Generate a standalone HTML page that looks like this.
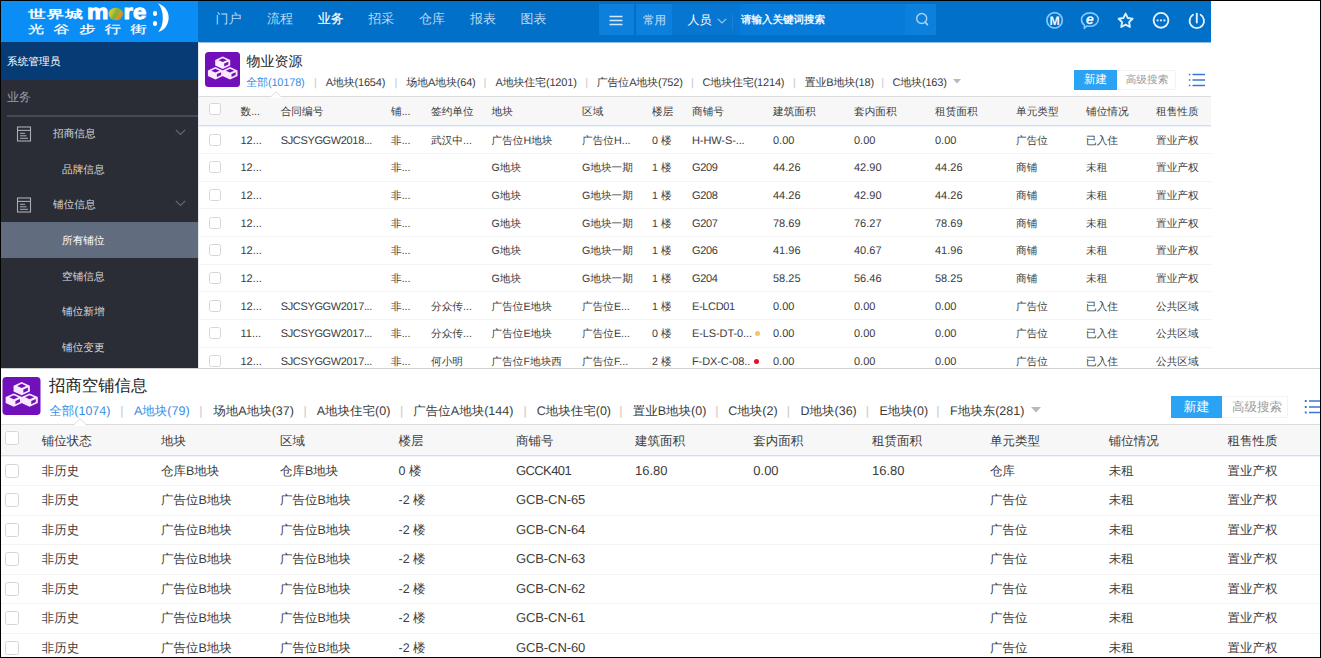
<!DOCTYPE html>
<html lang="zh"><head><meta charset="utf-8"><title>物业资源</title>
<style>
*{box-sizing:border-box;margin:0;padding:0}
html,body{width:1321px;height:658px;overflow:hidden;background:#fff}
body{font-family:"Liberation Sans",sans-serif;color:#333;position:relative;font-size:11px;text-rendering:geometricPrecision}
.a{position:absolute;white-space:nowrap}
.t{position:absolute;white-space:nowrap;line-height:16px;height:16px}
/* top panel */
#logo{left:0;top:0;width:198px;height:42px;background:#0a8ef5;overflow:hidden}
#hdr{left:198px;top:0;width:1013px;height:42px;background:#0170c9}
.nav{font-size:13px;color:#b9d9f4;top:11px}
.nav.on{color:#fff;-webkit-text-stroke:0.15px #fff}
.hb{top:4px;height:31px;background:#0d80dd}
#user{left:0;top:42px;width:198px;height:38px;background:#063b75}
#side{left:0;top:80px;width:198px;height:288px;background:#2a2d36}
.si{font-size:10.67px;color:#d6d8dd;left:62px}
.sp{font-size:10.67px;color:#d6d8dd;left:53px}
/* table top */
.c1{font-size:10.67px;color:#3c3c3c}
.l1{font-size:11px;letter-spacing:-0.35px}
.n1{font-size:11px}
.h1{font-size:10.67px;color:#3c3c3c}
.cb{position:absolute;border:1px solid #d6d6d6;border-radius:2.5px;background:#fff}
.sep{position:absolute;height:1px;background:#f3f3f3}
.f1{font-size:11px;color:#3c3c3c;top:74.7px;letter-spacing:-0.18px}
/* bottom */
.f2{font-size:12.5px;color:#3c3c3c;top:402.7px}
.h2{font-size:12.5px;color:#3c3c3c}
.c2{font-size:12.5px;color:#3c3c3c}
.n2{font-size:13px}
.l2{font-size:13px;letter-spacing:-0.6px}
.t.hy{letter-spacing:-0.1px}
.t.blue{color:#3a8ee6}
.t.bar{color:#c8c8c8}
</style></head><body>

<svg width="0" height="0" style="position:absolute"><defs>
<symbol id="cubes" viewBox="0 0 35 35">
<rect x="0" y="0" width="35" height="35" rx="3.5" fill="#7110ba"/>
<g id="cube1">
<path d="M17.7 4.6 L25.2 8 L25.2 13.4 L17.7 16.9 L10.2 13.4 L10.2 8 Z" fill="#fbe9ff"/>
<path d="M17.7 6.3 L21.9 8.2 L17.7 10.1 L13.5 8.2 Z" fill="#7110ba"/>
<path d="M19.2 11.6 L23.4 9.7 L23.4 12.6 L19.2 14.5 Z" fill="#7110ba"/>
</g>
<use href="#cube1" x="-7.3" y="10.5"/>
<use href="#cube1" x="7.3" y="10.5"/>
</symbol>
</defs></svg>

<div class="a" id="logo">
<div class="a" style="left:27.5px;top:4.5px;font-size:16px;line-height:20px;font-weight:bold;color:#fff;transform-origin:0 50%;transform:scale(1.12,0.7);letter-spacing:0.5px">世界城</div>
<div class="a" style="left:86.5px;top:0.5px;font-size:20px;line-height:24px;font-weight:bold;color:#fff;letter-spacing:0px;-webkit-text-stroke:0.9px #fff;transform-origin:0 50%;transform:scale(1.2,1.05)">m<span style="display:inline-block;width:11.5px;height:11.5px;border-radius:6px;margin:0 0.6px 0 0.6px;vertical-align:-0.5px;background:linear-gradient(115deg,#e9c92c 0%,#cfc22c 28%,#6fb63c 48%,#e98d2c 72%,#63b040 100%)"></span>re</div>
<div class="a" style="left:152.5px;top:11.2px;width:4.4px;height:4.4px;border-radius:3px;background:#fff"></div>
<div class="a" style="left:152.5px;top:21.2px;width:4.4px;height:4.4px;border-radius:3px;background:#fff"></div>
<svg class="a" style="left:156px;top:2px" width="14" height="32" viewBox="0 0 14 32"><path d="M2 1.2 C10.5 4.5 13.2 11 12.6 17 C12 23.5 8 28.5 2.2 30 C5.8 25.5 6.8 21 6.8 15.5 C6.8 10 5.4 5.5 2 1.2Z" fill="#fff"/></svg>
<div class="a" style="left:27.5px;top:20px;font-size:15px;line-height:20px;color:#fff;letter-spacing:8.7px;-webkit-text-stroke:0.3px #fff;transform-origin:0 50%;transform:scale(1.08,0.74)">光谷步行街</div>
</div>
<div class="a" style="left:198px;top:42px;width:1013px;height:1px;background:#8fc1e8"></div>
<div class="a" id="hdr">
<div class="t nav" style="left:17.6px">门户</div>
<div class="t nav" style="left:69.0px">流程</div>
<div class="t nav on" style="left:119.7px">业务</div>
<div class="t nav" style="left:170.3px">招采</div>
<div class="t nav" style="left:221.0px">仓库</div>
<div class="t nav" style="left:272.0px">报表</div>
<div class="t nav" style="left:322.5px">图表</div>
<div class="a hb" style="left:401px;width:35px"></div>
<svg class="a" style="left:411px;top:15px" width="14" height="11" viewBox="0 0 14 11"><path d="M0.5 1.5h13M0.5 5.5h13M0.5 9.5h13" stroke="#d4e9fb" stroke-width="1.5"/></svg>
<div class="a hb" style="left:438px;width:36px"></div>
<div class="t" style="left:445px;top:12.8px;font-size:11.5px;color:#b2d7f6;-webkit-text-stroke:0.2px #b2d7f6">常用</div>
<div class="a hb" style="left:474px;width:68px;background:#0776d0"></div>
<div class="a hb" style="left:542px;width:165px;background:#067bd9"></div>
<div class="t" style="left:489.5px;top:12px;font-size:12px;color:#fff">人员</div>
<svg class="a" style="left:519px;top:17.5px" width="10" height="6" viewBox="0 0 10 6"><path d="M0.8 0.8 L5 5 L9.2 0.8" stroke="#9ccaf0" stroke-width="1.1" fill="none"/></svg>
<div class="a" style="left:534px;top:14px;width:1px;height:16px;background:#1c80d8"></div>
<div class="t" style="left:543px;top:12px;font-size:10.5px;color:#eef6fd;font-weight:bold">请输入关键词搜索</div>
<div class="a hb" style="left:707px;width:31px;background:#0c80dd"></div>
<svg class="a" style="left:716px;top:11px" width="16" height="16" viewBox="0 0 16 16"><circle cx="7.7" cy="7.5" r="5" stroke="#a8d5fa" stroke-width="1.4" fill="none"/><path d="M11.3 11.2 L13.4 13.6" stroke="#a8d5fa" stroke-width="1.7" stroke-linecap="round"/></svg>
<svg class="a" style="left:846px;top:10px" width="21" height="21" viewBox="0 0 21 21"><circle cx="10.6" cy="10.3" r="7.7" stroke="#86c8ff" stroke-width="1.7" fill="none"/><text x="10.6" y="14.7" font-family="Liberation Sans, sans-serif" font-weight="bold" font-size="12.3" fill="#f4faff" text-anchor="middle">M</text></svg>
<svg class="a" style="left:881px;top:10px" width="22" height="21" viewBox="0 0 22 21"><path d="M11 2.9 C16 2.9 19.3 5.8 19.3 9.5 C19.3 13.2 15.6 16.3 10.4 16.3 C9.6 16.3 8.6 16.2 7.8 16 L5.3 18.3 L5.5 15.2 C3.5 13.9 2.5 11.9 2.5 9.5 C2.5 5.8 6 2.9 11 2.9Z" stroke="#86c8ff" stroke-width="1.6" fill="none" stroke-linejoin="round"/><text x="10.8" y="14" font-family="Liberation Sans, sans-serif" font-weight="bold" font-style="italic" font-size="14.5" fill="#f4faff" text-anchor="middle">e</text></svg>
<svg class="a" style="left:916.8px;top:10px" width="21" height="21" viewBox="0 0 21 21"><path d="M10.6 3.6 L12.8 8.0 L17.6 8.7 L14.1 12.1 L14.9 17.0 L10.6 14.7 L6.3 17.0 L7.1 12.1 L3.6 8.7 L8.4 8.0 Z" stroke="#dbeeff" stroke-width="1.9" fill="none" stroke-linejoin="round"/></svg>
<svg class="a" style="left:952px;top:10px" width="21" height="21" viewBox="0 0 21 21"><circle cx="11" cy="10.3" r="7.4" stroke="#e4f2ff" stroke-width="1.9" fill="none"/><circle cx="7.6" cy="10.4" r="1.15" fill="#cfe8ff"/><circle cx="11" cy="10.4" r="1.15" fill="#cfe8ff"/><circle cx="14.4" cy="10.4" r="1.15" fill="#cfe8ff"/></svg>
<svg class="a" style="left:988px;top:10px" width="21" height="21" viewBox="0 0 21 21"><path d="M7 4.8 A7.2 7.2 0 1 0 14.6 4.8" stroke="#e4f2ff" stroke-width="1.9" fill="none" stroke-linecap="round"/><path d="M10.8 3.6 V12.6" stroke="#e4f2ff" stroke-width="1.9" stroke-linecap="round"/></svg>
</div>
<div class="a" id="user"><div class="t" style="left:7px;top:11.5px;font-size:10.67px;color:#fff">系统管理员</div></div>
<div class="a" id="side">
<div class="t" style="left:7px;top:9px;font-size:12px;color:#9b9fa9">业务</div>
<div class="a" style="left:7px;top:35px;width:191px;height:1.5px;background:#474a53"></div>
<div class="a" style="left:0;top:142px;width:198px;height:36px;background:#626c7f"></div>
<svg class="a" style="left:16px;top:46px" width="16" height="16" viewBox="0 0 16 16"><rect x="1.5" y="1" width="13" height="14" stroke="#a9adb6" stroke-width="1.1" fill="none"/><path d="M1.5 4.4h13" stroke="#a9adb6" stroke-width="1.1"/><path d="M4 7.3h5M4 9.8h6.5M4 12.3h8" stroke="#a9adb6" stroke-width="1"/></svg>
<svg class="a" style="left:175px;top:49px" width="11" height="7" viewBox="0 0 11 7"><path d="M0.8 0.8 L5.5 5.5 L10.2 0.8" stroke="#656973" stroke-width="1.2" fill="none"/></svg>
<svg class="a" style="left:16px;top:117px" width="16" height="16" viewBox="0 0 16 16"><rect x="1.5" y="1" width="13" height="14" stroke="#a9adb6" stroke-width="1.1" fill="none"/><path d="M1.5 4.4h13" stroke="#a9adb6" stroke-width="1.1"/><path d="M4 7.3h5M4 9.8h6.5M4 12.3h8" stroke="#a9adb6" stroke-width="1"/></svg>
<svg class="a" style="left:175px;top:120px" width="11" height="7" viewBox="0 0 11 7"><path d="M0.8 0.8 L5.5 5.5 L10.2 0.8" stroke="#656973" stroke-width="1.2" fill="none"/></svg>
<div class="t sp" style="top:46.3px">招商信息</div>
<div class="t si" style="top:81.5px">品牌信息</div>
<div class="t sp" style="top:117px">铺位信息</div>
<div class="t si" style="top:153px;color:#fff">所有铺位</div>
<div class="t si" style="top:188.5px">空铺信息</div>
<div class="t si" style="top:224px">铺位新增</div>
<div class="t si" style="top:259.5px">铺位变更</div>
</div>
<div class="a" style="left:198px;top:42px;width:1px;height:326px;background:#dfe6ee"></div>
<svg class="a" style="left:205px;top:52px" width="35" height="35"><use href="#cubes"/></svg>
<div class="t" style="left:246.5px;top:51px;font-size:14px;line-height:20px;height:20px;color:#222">物业资源</div>
<div class="t f1 blue" style="left:246.3px">全部(10178)</div>
<div class="t f1" style="left:325.7px">A地块(1654)</div>
<div class="t f1" style="left:406.3px">场地A地块(64)</div>
<div class="t f1" style="left:495.5px">A地块住宅(1201)</div>
<div class="t f1" style="left:596.7px">广告位A地块(752)</div>
<div class="t f1" style="left:702.6px">C地块住宅(1214)</div>
<div class="t f1" style="left:804.7px">置业B地块(18)</div>
<div class="t f1" style="left:892.5px">C地块(163)</div>
<div class="t f1 bar" style="left:313.9px">|</div>
<div class="t f1 bar" style="left:394.5px">|</div>
<div class="t f1 bar" style="left:483.5px">|</div>
<div class="t f1 bar" style="left:585.2px">|</div>
<div class="t f1 bar" style="left:691.1px">|</div>
<div class="t f1 bar" style="left:792.9px">|</div>
<div class="t f1 bar" style="left:881.3px">|</div>
<svg class="a" style="left:953px;top:79px" width="8" height="5" viewBox="0 0 8 5"><path d="M0 0h8L4 4.6Z" fill="#b9b9b9"/></svg>
<div class="a" style="left:1074px;top:70px;width:43px;height:20px;background:#2aa3f5;color:#fff;font-size:11.5px;line-height:20px;text-align:center">新建</div>
<div class="a" style="left:1117px;top:70px;width:59px;height:20px;border:1px solid #f3f3f3;border-left:none;color:#9a9a9a;font-size:10.67px;line-height:18.5px;text-align:center;padding-left:2px">高级搜索</div>
<svg class="a" style="left:1188px;top:73px" width="18" height="14" viewBox="0 0 18 14"><path d="M4.5 1.5h12.5M4.5 7h12.5M4.5 12.5h12.5" stroke="#3f74d2" stroke-width="1.5"/><path d="M0.8 1.5h1.6M0.8 7h1.6M0.8 12.5h1.6" stroke="#3f74d2" stroke-width="1.6"/></svg>
<div class="a" style="left:199px;top:96px;width:1012px;height:30px;background:#f7f7f8;border-top:1px solid #dcdcdc;border-bottom:1px solid #c9dff3"></div>
<div class="a" style="left:199px;top:126px;width:1012px;height:1px;background:#edf4fb"></div>
<svg class="a" style="left:270px;top:91px" width="12" height="7" viewBox="0 0 12 7"><path d="M0 6.5 L6 0.8 L12 6.5" fill="#fff" stroke="#dcdcdc" stroke-width="1"/><path d="M0.8 6.6h10.4" stroke="#fff" stroke-width="1.4"/></svg>
<div class="cb" style="left:209px;top:102.5px;width:12px;height:12px"></div>
<div class="t h1" style="left:240.5px;top:103.8px">数...</div>
<div class="t h1" style="left:280.7px;top:103.8px">合同编号</div>
<div class="t h1" style="left:391.0px;top:103.8px">铺...</div>
<div class="t h1" style="left:431.0px;top:103.8px">签约单位</div>
<div class="t h1" style="left:491.5px;top:103.8px">地块</div>
<div class="t h1" style="left:582.0px;top:103.8px">区域</div>
<div class="t h1" style="left:652.0px;top:103.8px">楼层</div>
<div class="t h1" style="left:692.0px;top:103.8px">商铺号</div>
<div class="t h1" style="left:773.0px;top:103.8px">建筑面积</div>
<div class="t h1" style="left:854.0px;top:103.8px">套内面积</div>
<div class="t h1" style="left:935.0px;top:103.8px">租赁面积</div>
<div class="t h1" style="left:1016.0px;top:103.8px">单元类型</div>
<div class="t h1" style="left:1086.0px;top:103.8px">铺位情况</div>
<div class="t h1" style="left:1156.0px;top:103.8px">租售性质</div>
<div class="cb" style="left:209px;top:133.6px;width:12px;height:12px"></div>
<div class="sep" style="left:199px;top:153px;width:1012px"></div>
<div class="t c1 n1" style="left:240.5px;top:132.7px">12...</div>
<div class="t c1 l1" style="left:280.7px;top:132.7px">SJCSYGGW2018...</div>
<div class="t c1" style="left:391.0px;top:132.7px">非...</div>
<div class="t c1" style="left:431.0px;top:132.7px">武汉中...</div>
<div class="t c1" style="left:491.5px;top:132.7px">广告位H地块</div>
<div class="t c1" style="left:582.0px;top:132.7px">广告位H...</div>
<div class="t c1" style="left:652.0px;top:132.7px">0 楼</div>
<div class="t c1 l1 hy" style="left:692.0px;top:132.7px">H-HW-S-...</div>
<div class="t c1 n1" style="left:773.0px;top:132.7px">0.00</div>
<div class="t c1 n1" style="left:854.0px;top:132.7px">0.00</div>
<div class="t c1 n1" style="left:935.0px;top:132.7px">0.00</div>
<div class="t c1" style="left:1016.0px;top:132.7px">广告位</div>
<div class="t c1" style="left:1086.0px;top:132.7px">已入住</div>
<div class="t c1" style="left:1156.0px;top:132.7px">置业产权</div>
<div class="cb" style="left:209px;top:161.3px;width:12px;height:12px"></div>
<div class="sep" style="left:199px;top:181px;width:1012px"></div>
<div class="t c1 n1" style="left:240.5px;top:160.4px">12...</div>
<div class="t c1" style="left:391.0px;top:160.4px">非...</div>
<div class="t c1" style="left:491.5px;top:160.4px">G地块</div>
<div class="t c1" style="left:582.0px;top:160.4px">G地块一期</div>
<div class="t c1" style="left:652.0px;top:160.4px">1 楼</div>
<div class="t c1 l1" style="left:692.0px;top:160.4px">G209</div>
<div class="t c1 n1" style="left:773.0px;top:160.4px">44.26</div>
<div class="t c1 n1" style="left:854.0px;top:160.4px">42.90</div>
<div class="t c1 n1" style="left:935.0px;top:160.4px">44.26</div>
<div class="t c1" style="left:1016.0px;top:160.4px">商铺</div>
<div class="t c1" style="left:1086.0px;top:160.4px">未租</div>
<div class="t c1" style="left:1156.0px;top:160.4px">置业产权</div>
<div class="cb" style="left:209px;top:188.9px;width:12px;height:12px"></div>
<div class="sep" style="left:199px;top:208px;width:1012px"></div>
<div class="t c1 n1" style="left:240.5px;top:188.0px">12...</div>
<div class="t c1" style="left:391.0px;top:188.0px">非...</div>
<div class="t c1" style="left:491.5px;top:188.0px">G地块</div>
<div class="t c1" style="left:582.0px;top:188.0px">G地块一期</div>
<div class="t c1" style="left:652.0px;top:188.0px">1 楼</div>
<div class="t c1 l1" style="left:692.0px;top:188.0px">G208</div>
<div class="t c1 n1" style="left:773.0px;top:188.0px">44.26</div>
<div class="t c1 n1" style="left:854.0px;top:188.0px">42.90</div>
<div class="t c1 n1" style="left:935.0px;top:188.0px">44.26</div>
<div class="t c1" style="left:1016.0px;top:188.0px">商铺</div>
<div class="t c1" style="left:1086.0px;top:188.0px">未租</div>
<div class="t c1" style="left:1156.0px;top:188.0px">置业产权</div>
<div class="cb" style="left:209px;top:216.6px;width:12px;height:12px"></div>
<div class="sep" style="left:199px;top:236px;width:1012px"></div>
<div class="t c1 n1" style="left:240.5px;top:215.7px">12...</div>
<div class="t c1" style="left:391.0px;top:215.7px">非...</div>
<div class="t c1" style="left:491.5px;top:215.7px">G地块</div>
<div class="t c1" style="left:582.0px;top:215.7px">G地块一期</div>
<div class="t c1" style="left:652.0px;top:215.7px">1 楼</div>
<div class="t c1 l1" style="left:692.0px;top:215.7px">G207</div>
<div class="t c1 n1" style="left:773.0px;top:215.7px">78.69</div>
<div class="t c1 n1" style="left:854.0px;top:215.7px">76.27</div>
<div class="t c1 n1" style="left:935.0px;top:215.7px">78.69</div>
<div class="t c1" style="left:1016.0px;top:215.7px">商铺</div>
<div class="t c1" style="left:1086.0px;top:215.7px">未租</div>
<div class="t c1" style="left:1156.0px;top:215.7px">置业产权</div>
<div class="cb" style="left:209px;top:244.2px;width:12px;height:12px"></div>
<div class="sep" style="left:199px;top:264px;width:1012px"></div>
<div class="t c1 n1" style="left:240.5px;top:243.3px">12...</div>
<div class="t c1" style="left:391.0px;top:243.3px">非...</div>
<div class="t c1" style="left:491.5px;top:243.3px">G地块</div>
<div class="t c1" style="left:582.0px;top:243.3px">G地块一期</div>
<div class="t c1" style="left:652.0px;top:243.3px">1 楼</div>
<div class="t c1 l1" style="left:692.0px;top:243.3px">G206</div>
<div class="t c1 n1" style="left:773.0px;top:243.3px">41.96</div>
<div class="t c1 n1" style="left:854.0px;top:243.3px">40.67</div>
<div class="t c1 n1" style="left:935.0px;top:243.3px">41.96</div>
<div class="t c1" style="left:1016.0px;top:243.3px">商铺</div>
<div class="t c1" style="left:1086.0px;top:243.3px">未租</div>
<div class="t c1" style="left:1156.0px;top:243.3px">置业产权</div>
<div class="cb" style="left:209px;top:271.9px;width:12px;height:12px"></div>
<div class="sep" style="left:199px;top:291px;width:1012px"></div>
<div class="t c1 n1" style="left:240.5px;top:270.9px">12...</div>
<div class="t c1" style="left:391.0px;top:270.9px">非...</div>
<div class="t c1" style="left:491.5px;top:270.9px">G地块</div>
<div class="t c1" style="left:582.0px;top:270.9px">G地块一期</div>
<div class="t c1" style="left:652.0px;top:270.9px">1 楼</div>
<div class="t c1 l1" style="left:692.0px;top:270.9px">G204</div>
<div class="t c1 n1" style="left:773.0px;top:270.9px">58.25</div>
<div class="t c1 n1" style="left:854.0px;top:270.9px">56.46</div>
<div class="t c1 n1" style="left:935.0px;top:270.9px">58.25</div>
<div class="t c1" style="left:1016.0px;top:270.9px">商铺</div>
<div class="t c1" style="left:1086.0px;top:270.9px">未租</div>
<div class="t c1" style="left:1156.0px;top:270.9px">置业产权</div>
<div class="cb" style="left:209px;top:299.5px;width:12px;height:12px"></div>
<div class="sep" style="left:199px;top:319px;width:1012px"></div>
<div class="t c1 n1" style="left:240.5px;top:298.6px">12...</div>
<div class="t c1 l1" style="left:280.7px;top:298.6px">SJCSYGGW2017...</div>
<div class="t c1" style="left:391.0px;top:298.6px">非...</div>
<div class="t c1" style="left:431.0px;top:298.6px">分众传...</div>
<div class="t c1" style="left:491.5px;top:298.6px">广告位E地块</div>
<div class="t c1" style="left:582.0px;top:298.6px">广告位E...</div>
<div class="t c1" style="left:652.0px;top:298.6px">1 楼</div>
<div class="t c1 l1" style="left:692.0px;top:298.6px">E-LCD01</div>
<div class="t c1 n1" style="left:773.0px;top:298.6px">0.00</div>
<div class="t c1 n1" style="left:854.0px;top:298.6px">0.00</div>
<div class="t c1 n1" style="left:935.0px;top:298.6px">0.00</div>
<div class="t c1" style="left:1016.0px;top:298.6px">广告位</div>
<div class="t c1" style="left:1086.0px;top:298.6px">已入住</div>
<div class="t c1" style="left:1156.0px;top:298.6px">公共区域</div>
<div class="cb" style="left:209px;top:327.2px;width:12px;height:12px"></div>
<div class="sep" style="left:199px;top:347px;width:1012px"></div>
<div class="t c1 n1" style="left:240.5px;top:326.2px">11...</div>
<div class="t c1 l1" style="left:280.7px;top:326.2px">SJCSYGGW2017...</div>
<div class="t c1" style="left:391.0px;top:326.2px">非...</div>
<div class="t c1" style="left:431.0px;top:326.2px">分众传...</div>
<div class="t c1" style="left:491.5px;top:326.2px">广告位E地块</div>
<div class="t c1" style="left:582.0px;top:326.2px">广告位E...</div>
<div class="t c1" style="left:652.0px;top:326.2px">0 楼</div>
<div class="t c1 l1 hy" style="left:692.0px;top:326.2px">E-LS-DT-0...</div>
<div class="t c1 n1" style="left:773.0px;top:326.2px">0.00</div>
<div class="t c1 n1" style="left:854.0px;top:326.2px">0.00</div>
<div class="t c1 n1" style="left:935.0px;top:326.2px">0.00</div>
<div class="t c1" style="left:1016.0px;top:326.2px">广告位</div>
<div class="t c1" style="left:1086.0px;top:326.2px">已入住</div>
<div class="t c1" style="left:1156.0px;top:326.2px">公共区域</div>
<div class="cb" style="left:209px;top:354.8px;width:12px;height:12px"></div>
<div class="t c1 n1" style="left:240.5px;top:353.9px">12...</div>
<div class="t c1 l1" style="left:280.7px;top:353.9px">SJCSYGGW2017...</div>
<div class="t c1" style="left:391.0px;top:353.9px">非...</div>
<div class="t c1" style="left:431.0px;top:353.9px">何小明</div>
<div class="t c1" style="left:491.5px;top:353.9px">广告位F地块西</div>
<div class="t c1" style="left:582.0px;top:353.9px">广告位F...</div>
<div class="t c1" style="left:652.0px;top:353.9px">2 楼</div>
<div class="t c1 l1 hy" style="left:692.0px;top:353.9px">F-DX-C-08..</div>
<div class="t c1 n1" style="left:773.0px;top:353.9px">0.00</div>
<div class="t c1 n1" style="left:854.0px;top:353.9px">0.00</div>
<div class="t c1 n1" style="left:935.0px;top:353.9px">0.00</div>
<div class="t c1" style="left:1016.0px;top:353.9px">广告位</div>
<div class="t c1" style="left:1086.0px;top:353.9px">已入住</div>
<div class="t c1" style="left:1156.0px;top:353.9px">公共区域</div>
<div class="a" style="left:755px;top:331.3px;width:5px;height:5px;border-radius:3px;background:#f6c466"></div>
<div class="a" style="left:754.2px;top:358.7px;width:5.2px;height:5.2px;border-radius:3px;background:#e81123"></div>
<div class="a" style="left:0;top:368px;width:1321px;height:290px;background:#fff;border-top:1px solid #d2d2d2;overflow:hidden"></div>
<svg class="a" style="left:2px;top:377px" width="39" height="38"><use href="#cubes"/></svg>
<div class="t" style="left:49px;top:374px;font-size:16.4px;line-height:24px;height:24px;color:#222">招商空铺信息</div>
<div class="t f2 blue" style="left:49.3px">全部(1074)</div>
<div class="t f2 blue" style="left:134.0px">A地块(79)</div>
<div class="t f2" style="left:213.3px">场地A地块(37)</div>
<div class="t f2" style="left:316.7px">A地块住宅(0)</div>
<div class="t f2" style="left:413.3px">广告位A地块(144)</div>
<div class="t f2" style="left:536.7px">C地块住宅(0)</div>
<div class="t f2" style="left:632.7px">置业B地块(0)</div>
<div class="t f2" style="left:728.3px">C地块(2)</div>
<div class="t f2" style="left:800.5px">D地块(36)</div>
<div class="t f2" style="left:879.5px">E地块(0)</div>
<div class="t f2" style="left:950.0px">F地块东(281)</div>
<div class="t f2 bar" style="left:120.2px">|</div>
<div class="t f2 bar" style="left:199.2px">|</div>
<div class="t f2 bar" style="left:303.5px">|</div>
<div class="t f2 bar" style="left:400.0px">|</div>
<div class="t f2 bar" style="left:523.5px">|</div>
<div class="t f2 bar" style="left:619.2px">|</div>
<div class="t f2 bar" style="left:715.2px">|</div>
<div class="t f2 bar" style="left:786.8px">|</div>
<div class="t f2 bar" style="left:865.7px">|</div>
<div class="t f2 bar" style="left:936.2px">|</div>
<svg class="a" style="left:1030.5px;top:407px" width="10" height="6" viewBox="0 0 10 6"><path d="M0 0h10L5 5.6Z" fill="#b9b9b9"/></svg>
<div class="a" style="left:1171px;top:396px;width:51px;height:22px;background:#2aa3f5;color:#fff;font-size:13px;line-height:22px;text-align:center">新建</div>
<div class="a" style="left:1222px;top:396px;width:66px;height:22px;border:1px solid #f3f3f3;border-left:none;color:#9a9a9a;font-size:12.5px;line-height:20.5px;text-align:center;padding-left:5px">高级搜索</div>
<svg class="a" style="left:1304px;top:399px" width="20" height="16" viewBox="0 0 20 16"><path d="M5 2h15M5 8h15M5 13.5h15" stroke="#3f74d2" stroke-width="1.7"/><path d="M0.8 2h1.9M0.8 8h1.9M0.8 13.5h1.9" stroke="#3f74d2" stroke-width="1.8"/></svg>
<div class="a" style="left:1px;top:424px;width:1319px;height:32px;background:#f7f7f8;border-top:1px solid #dcdcdc;border-bottom:1px solid #c9dff3"></div>
<div class="a" style="left:1px;top:456px;width:1319px;height:1px;background:#edf4fb"></div>
<svg class="a" style="left:73px;top:418px" width="14" height="8" viewBox="0 0 14 8"><path d="M0 7.5 L7 0.8 L14 7.5" fill="#fff" stroke="#dcdcdc" stroke-width="1"/><path d="M0.8 7.6h12.4" stroke="#fff" stroke-width="1.4"/></svg>
<div class="cb" style="left:5px;top:430.5px;width:14px;height:14px"></div>
<div class="t h2" style="left:41.7px;top:432.9px">铺位状态</div>
<div class="t h2" style="left:161.0px;top:432.9px">地块</div>
<div class="t h2" style="left:280.0px;top:432.9px">区域</div>
<div class="t h2" style="left:398.5px;top:432.9px">楼层</div>
<div class="t h2" style="left:516.0px;top:432.9px">商铺号</div>
<div class="t h2" style="left:635.0px;top:432.9px">建筑面积</div>
<div class="t h2" style="left:753.3px;top:432.9px">套内面积</div>
<div class="t h2" style="left:872.0px;top:432.9px">租赁面积</div>
<div class="t h2" style="left:990.0px;top:432.9px">单元类型</div>
<div class="t h2" style="left:1108.8px;top:432.9px">铺位情况</div>
<div class="t h2" style="left:1227.6px;top:432.9px">租售性质</div>
<div class="cb" style="left:5px;top:463.6px;width:14px;height:14px"></div>
<div class="sep" style="left:1px;top:485px;width:1319px"></div>
<div class="t c2" style="left:41.7px;top:462.6px">非历史</div>
<div class="t c2" style="left:161.0px;top:462.6px">仓库B地块</div>
<div class="t c2" style="left:280.0px;top:462.6px">仓库B地块</div>
<div class="t c2" style="left:398.5px;top:462.6px">0 楼</div>
<div class="t c2 l2" style="left:516.0px;top:462.6px">GCCK401</div>
<div class="t c2 n2" style="left:635.0px;top:462.6px">16.80</div>
<div class="t c2 n2" style="left:753.3px;top:462.6px">0.00</div>
<div class="t c2 n2" style="left:872.0px;top:462.6px">16.80</div>
<div class="t c2" style="left:990.0px;top:462.6px">仓库</div>
<div class="t c2" style="left:1108.8px;top:462.6px">未租</div>
<div class="t c2" style="left:1227.6px;top:462.6px">置业产权</div>
<div class="cb" style="left:5px;top:493.1px;width:14px;height:14px"></div>
<div class="sep" style="left:1px;top:515px;width:1319px"></div>
<div class="t c2" style="left:41.7px;top:492.1px">非历史</div>
<div class="t c2" style="left:161.0px;top:492.1px">广告位B地块</div>
<div class="t c2" style="left:280.0px;top:492.1px">广告位B地块</div>
<div class="t c2" style="left:398.5px;top:492.1px">-2 楼</div>
<div class="t c2 l2 hy" style="left:516.0px;top:492.1px">GCB-CN-65</div>
<div class="t c2" style="left:990.0px;top:492.1px">广告位</div>
<div class="t c2" style="left:1108.8px;top:492.1px">未租</div>
<div class="t c2" style="left:1227.6px;top:492.1px">置业产权</div>
<div class="cb" style="left:5px;top:522.6px;width:14px;height:14px"></div>
<div class="sep" style="left:1px;top:544px;width:1319px"></div>
<div class="t c2" style="left:41.7px;top:521.6px">非历史</div>
<div class="t c2" style="left:161.0px;top:521.6px">广告位B地块</div>
<div class="t c2" style="left:280.0px;top:521.6px">广告位B地块</div>
<div class="t c2" style="left:398.5px;top:521.6px">-2 楼</div>
<div class="t c2 l2 hy" style="left:516.0px;top:521.6px">GCB-CN-64</div>
<div class="t c2" style="left:990.0px;top:521.6px">广告位</div>
<div class="t c2" style="left:1108.8px;top:521.6px">未租</div>
<div class="t c2" style="left:1227.6px;top:521.6px">置业产权</div>
<div class="cb" style="left:5px;top:552.1px;width:14px;height:14px"></div>
<div class="sep" style="left:1px;top:574px;width:1319px"></div>
<div class="t c2" style="left:41.7px;top:551.1px">非历史</div>
<div class="t c2" style="left:161.0px;top:551.1px">广告位B地块</div>
<div class="t c2" style="left:280.0px;top:551.1px">广告位B地块</div>
<div class="t c2" style="left:398.5px;top:551.1px">-2 楼</div>
<div class="t c2 l2 hy" style="left:516.0px;top:551.1px">GCB-CN-63</div>
<div class="t c2" style="left:990.0px;top:551.1px">广告位</div>
<div class="t c2" style="left:1108.8px;top:551.1px">未租</div>
<div class="t c2" style="left:1227.6px;top:551.1px">置业产权</div>
<div class="cb" style="left:5px;top:581.6px;width:14px;height:14px"></div>
<div class="sep" style="left:1px;top:603px;width:1319px"></div>
<div class="t c2" style="left:41.7px;top:580.6px">非历史</div>
<div class="t c2" style="left:161.0px;top:580.6px">广告位B地块</div>
<div class="t c2" style="left:280.0px;top:580.6px">广告位B地块</div>
<div class="t c2" style="left:398.5px;top:580.6px">-2 楼</div>
<div class="t c2 l2 hy" style="left:516.0px;top:580.6px">GCB-CN-62</div>
<div class="t c2" style="left:990.0px;top:580.6px">广告位</div>
<div class="t c2" style="left:1108.8px;top:580.6px">未租</div>
<div class="t c2" style="left:1227.6px;top:580.6px">置业产权</div>
<div class="cb" style="left:5px;top:611.1px;width:14px;height:14px"></div>
<div class="sep" style="left:1px;top:633px;width:1319px"></div>
<div class="t c2" style="left:41.7px;top:610.1px">非历史</div>
<div class="t c2" style="left:161.0px;top:610.1px">广告位B地块</div>
<div class="t c2" style="left:280.0px;top:610.1px">广告位B地块</div>
<div class="t c2" style="left:398.5px;top:610.1px">-2 楼</div>
<div class="t c2 l2 hy" style="left:516.0px;top:610.1px">GCB-CN-61</div>
<div class="t c2" style="left:990.0px;top:610.1px">广告位</div>
<div class="t c2" style="left:1108.8px;top:610.1px">未租</div>
<div class="t c2" style="left:1227.6px;top:610.1px">置业产权</div>
<div class="cb" style="left:5px;top:640.6px;width:14px;height:14px"></div>
<div class="t c2" style="left:41.7px;top:639.6px">非历史</div>
<div class="t c2" style="left:161.0px;top:639.6px">广告位B地块</div>
<div class="t c2" style="left:280.0px;top:639.6px">广告位B地块</div>
<div class="t c2" style="left:398.5px;top:639.6px">-2 楼</div>
<div class="t c2 l2 hy" style="left:516.0px;top:639.6px">GCB-CN-60</div>
<div class="t c2" style="left:990.0px;top:639.6px">广告位</div>
<div class="t c2" style="left:1108.8px;top:639.6px">未租</div>
<div class="t c2" style="left:1227.6px;top:639.6px">置业产权</div>
<div class="a" style="left:0;top:0;width:1321px;height:658px;border:1px solid #000;pointer-events:none"></div>
</body></html>
